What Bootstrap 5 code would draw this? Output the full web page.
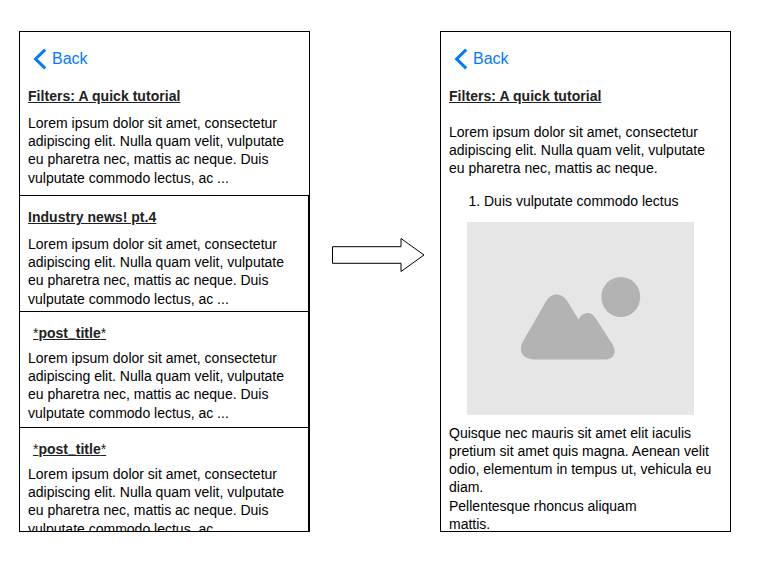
<!DOCTYPE html>
<html lang="en">
<head>
<meta charset="utf-8">
<meta name="viewport" content="width=device-width, initial-scale=1">
<title>Posts wireframe</title>
<link href="https://cdn.jsdelivr.net/npm/bootstrap@5.3.0/dist/css/bootstrap.min.css" rel="stylesheet">
<style>
body { font-family: "Liberation Sans", Arial, sans-serif; font-size: 14px; line-height: 18.2px; color: #000; background: #fff; }
.board { padding: 31px 0 0 19px; height: 564px; }
.screen { width: 291px; height: 501px; border: 1px solid #000; }
.back-link { color: #007aff; font-size: 16px; line-height: 20px; padding: 17px 0 0 14px; height: 55px; gap: 6px; }
.post-title { font-size: 14px; line-height: 18px; color: #212121; letter-spacing: .04px; margin: 0 0 9px; }
.post-intro { height: 163px; }
.post-item { height: 116px; border-top: 1px solid #000; border-right: 1px solid #000; padding: 12px 0 0 8px; }
.title-slot { margin: 0 0 7px 5px; letter-spacing: 0; }
.title-detail { margin-bottom: 18px; }
.underscore { vertical-align: 1px; line-height: 1; text-decoration-skip-ink: none; }
.body-copy { width: 270px; }
.flow-arrow { margin: 206px 15px 0 22px; }
.placeholder-pic { margin: 12px 0 9px 26px; }
.steps { padding-left: 35px; margin: 14px 0 0; }
</style>
</head>
<body>
<main class="board d-flex align-items-start overflow-hidden">
  <section class="screen overflow-hidden flex-shrink-0">
    <div class="post-intro">
      <a class="back-link d-flex align-items-start text-decoration-none" href="#">
        <svg width="12" height="20" viewBox="0 0 12 20" fill="none" stroke="#007aff" stroke-width="3" overflow="visible"><path d="M11.200 .6 1.600 10 11.200 19.400"/></svg>
        <span>Back</span>
      </a>
      <div class="ps-2">
        <h2 class="post-title fw-bold text-decoration-underline">Filters: A quick tutorial</h2>
        <p class="body-copy m-0">Lorem ipsum dolor sit amet, consectetur<br>adipiscing elit. Nulla quam velit, vulputate<br>eu pharetra nec, mattis ac neque. Duis<br>vulputate commodo lectus, ac ...</p>
      </div>
    </div>
    <article class="post-item">
      <h2 class="post-title fw-bold text-decoration-underline">Industry news! pt.4</h2>
      <p class="body-copy m-0">Lorem ipsum dolor sit amet, consectetur<br>adipiscing elit. Nulla quam velit, vulputate<br>eu pharetra nec, mattis ac neque. Duis<br>vulputate commodo lectus, ac ...</p>
    </article>
    <article class="post-item">
      <h2 class="post-title title-slot text-decoration-underline"><span class="fw-normal">*</span><b>post<span class="underscore">_</span>title</b><span class="fw-normal">*</span></h2>
      <p class="body-copy m-0">Lorem ipsum dolor sit amet, consectetur<br>adipiscing elit. Nulla quam velit, vulputate<br>eu pharetra nec, mattis ac neque. Duis<br>vulputate commodo lectus, ac ...</p>
    </article>
    <article class="post-item">
      <h2 class="post-title title-slot text-decoration-underline"><span class="fw-normal">*</span><b>post<span class="underscore">_</span>title</b><span class="fw-normal">*</span></h2>
      <p class="body-copy m-0">Lorem ipsum dolor sit amet, consectetur<br>adipiscing elit. Nulla quam velit, vulputate<br>eu pharetra nec, mattis ac neque. Duis<br>vulputate commodo lectus, ac ...</p>
    </article>
  </section>

  <svg class="flow-arrow flex-shrink-0" width="93" height="36" viewBox="0 0 93 36" fill="#fff" stroke="#000" stroke-width="1"><path d="M.5 9.7H69V1.5L92 18 69 34.5V26.3H.5Z"/></svg>

  <section class="screen overflow-hidden flex-shrink-0">
    <a class="back-link d-flex align-items-start text-decoration-none" href="#">
      <svg width="12" height="20" viewBox="0 0 12 20" fill="none" stroke="#007aff" stroke-width="3" overflow="visible"><path d="M11.200 .6 1.600 10 11.200 19.400"/></svg>
      <span>Back</span>
    </a>
    <div class="ps-2">
      <h2 class="post-title title-detail fw-bold text-decoration-underline">Filters: A quick tutorial</h2>
      <p class="body-copy m-0">Lorem ipsum dolor sit amet, consectetur<br>adipiscing elit. Nulla quam velit, vulputate<br>eu pharetra nec, mattis ac neque.</p>
      <ol class="steps"><li>Duis vulputate commodo lectus</li></ol>
    </div>
    <svg class="placeholder-pic d-block" width="227" height="193" viewBox="0 0 227 193"><rect width="227" height="193" fill="#e6e6e6"/><g fill="#b3b3b3"><ellipse cx="153.8" cy="75" rx="19.4" ry="20"/><path d="M79 79.500C84 70 95 70 100.500 79.500L111.500 97.500C116 89.500 124 89 128.500 96L145.500 122.500C150.500 131 146 137.500 138.500 137.500H69C54 137.500 51 128 56.500 118.500Z"/></g></svg>
    <div class="ps-2">
      <p class="body-copy m-0">Quisque nec mauris sit amet elit iaculis<br>pretium sit amet quis magna. Aenean velit<br>odio, elementum in tempus ut, vehicula eu<br>diam.<br>Pellentesque rhoncus aliquam<br>mattis.</p>
    </div>
  </section>
</main>
<script src="https://cdn.jsdelivr.net/npm/bootstrap@5.3.0/dist/js/bootstrap.bundle.min.js"></script>
</body>
</html>
